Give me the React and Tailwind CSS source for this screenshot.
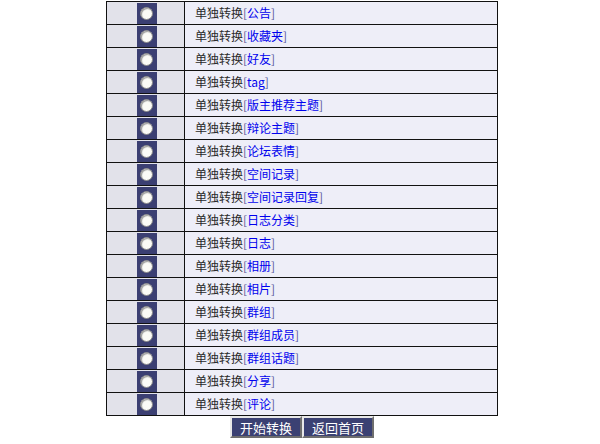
const ITEMS = [
  '公告',
  '收藏夹',
  '好友',
  'tag',
  '版主推荐主题',
  '辩论主题',
  '论坛表情',
  '空间记录',
  '空间记录回复',
  '日志分类',
  '日志',
  '相册',
  '相片',
  '群组',
  '群组成员',
  '群组话题',
  '分享',
  '评论',
];

function Radio() {
  return (
    <div className="w-[20px] h-[21px] bg-[#3b3f72] flex items-center justify-center">
      <div className="w-[13px] h-[13px] rounded-full bg-[#fbfbf6] border border-[#8a8a8a] shadow-[inset_1px_1px_1px_#9a9a9a]" />
    </div>
  );
}

export default function App() {
  return (
    <div className="w-[600px] h-[444px] bg-white overflow-hidden pt-[1px] text-[12px] font-['Noto_Sans_CJK_SC','Noto_Sans',sans-serif]">
      <div className="ml-[106px] w-[392px]">
        {/* converter rows */}
        <div className="border border-[#111] border-b-0">
          {ITEMS.map((name) => (
            <div key={name} className="grid grid-cols-[78px_1fr] border-b border-[#111] h-[23px]">
              <div className="bg-[#e2e2ea] border-r border-[#111] flex justify-center items-end pl-[2px]">
                <Radio />
              </div>
              <div className="bg-[#eeeef8] flex items-center pl-[10px] leading-none text-[#2a2a2a]">
                <span>单独转换</span>
                <span className="text-[#5a5a9a]">[</span>
                <span className="text-[#0000ee]">{name}</span>
                <span className="text-[#5a5a9a]">]</span>
              </div>
            </div>
          ))}
        </div>

        {/* actions */}
        <div className="flex justify-center">
          <button className="w-[72px] h-[22px] bg-[#3b4173] text-white text-[13px] leading-none border-2 border-t-[#e8e8e8] border-l-[#e8e8e8] border-b-[#6e6e6e] border-r-[#6e6e6e]">
            开始转换
          </button>
          <button className="w-[72px] h-[22px] bg-[#3b4173] text-white text-[13px] leading-none border-2 border-t-[#e8e8e8] border-l-[#e8e8e8] border-b-[#6e6e6e] border-r-[#6e6e6e]">
            返回首页
          </button>
        </div>
      </div>
    </div>
  );
}
